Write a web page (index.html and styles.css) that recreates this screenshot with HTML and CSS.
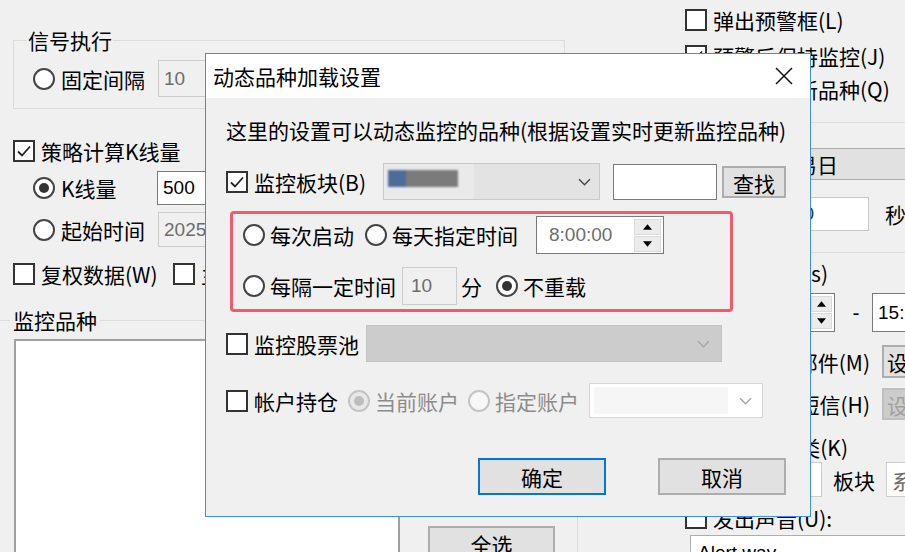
FILE: index.html
```html
<!DOCTYPE html>
<html lang="zh-CN">
<head>
    <meta charset="UTF-8">
    <title>动态品种加载设置</title>
    <link rel="stylesheet" href="styles.css">
</head>
<body>
    <div class="app">
        <!-- main window, left part -->
        <div class="left-col">
            <fieldset class="group group-signal">
                <legend>信号执行</legend>
                <div class="row row-fixed">
                    <span class="radio"></span><span class="lbl w97">固定间隔</span>
                    <span class="edit edit-off w120">10</span>
                </div>
            </fieldset>

            <div class="row row-kcheck">
                <span class="check on"><svg viewBox="0 0 18 18"><path d="M3 9.5l4 4 8-9"/></svg></span>
                <span class="lbl">策略计算K线量</span>
            </div>
            <div class="row row-kbars indent">
                <span class="radio on"></span><span class="lbl w96">K线量</span>
                <span class="edit w120">500</span>
            </div>
            <div class="row row-start indent">
                <span class="radio"></span><span class="lbl w97">起始时间</span>
                <span class="edit edit-off w120">2025-01-01</span>
            </div>
            <div class="row row-adj">
                <span class="check"></span><span class="lbl w132">复权数据(W)</span>
                <span class="check"></span><span class="lbl">主图叠加</span>
            </div>

            <fieldset class="group group-list">
                <legend>监控品种</legend>
                <div class="list-wrap">
                    <div class="listbox"></div>
                    <div class="list-side"><button class="btn btn-all">全选</button></div>
                </div>
            </fieldset>
        </div>

        <!-- main window, right part -->
        <div class="right-col">
            <div class="rrow r1"><span class="check"></span><span class="lbl">弹出预警框(L)</span></div>
            <div class="rrow r2">
                <span class="check on"><svg viewBox="0 0 18 18"><path d="M3 9.5l4 4 8-9"/></svg></span>
                <span class="lbl">预警后保持监控(J)</span>
            </div>
            <div class="rrow r3"><span class="check"></span><span class="lbl">自动添加新品种(Q)</span></div>

            <div class="rgroup rgroup-time">
                <div class="day-bar">只在交易日</div>
                <div class="row row-interval">
                    <span class="edit edit-sec">60</span><span class="lbl sec">秒</span>
                </div>
            </div>

            <div class="rgroup rgroup-alert">
                <div class="row r-range"><span class="lbl rlabel w138">监控时段(s)</span></div>
                <div class="row r-spin">
                    <span class="edit spin-edit">
                        <span>09:30:00</span>
                        <span class="spin-btns">
                            <span class="spin-btn"><svg viewBox="0 0 8 5"><path d="M0 5L4 0 8 5z"/></svg></span>
                            <span class="spin-btn"><svg viewBox="0 0 8 5"><path d="M0 0L4 5 8 0z"/></svg></span>
                        </span>
                    </span>
                    <span class="dash">-</span>
                    <span class="edit time-edit">15:00:00</span>
                </div>
                <div class="row r-mail"><span class="lbl rlabel w180">发送邮件(M)</span><button class="btn btn-set">设置</button></div>
                <div class="row r-sms"><span class="lbl rlabel w180">发送短信(H)</span><button class="btn btn-set" disabled>设置</button></div>
                <div class="row r-cat"><span class="lbl rlabel w158">品种分类(K)</span></div>
                <div class="row r-board">
                    <span class="edit board-edit">1</span><span class="lbl board-lbl">板块</span>
                    <span class="edit board-combo">系统板块</span>
                </div>
            </div>

            <div class="rrow r-sound"><span class="check"></span><span class="lbl">发出声音(U):</span></div>
            <div class="sound-file"><span class="edit sound-edit">Alert.wav</span></div>
        </div>
    </div>

    <!-- modal dialog on top -->
    <div class="dialog">
        <div class="titlebar">
            <span class="title">动态品种加载设置</span>
            <svg class="close" viewBox="0 0 18 18"><path d="M1 1L17 17M17 1L1 17"/></svg>
        </div>
        <div class="dlg-body">
            <p class="desc">这里的设置可以动态监控的品种(根据设置实时更新监控品种)</p>

            <div class="drow row-board">
                <label class="chk-item w157">
                    <span class="check on"><svg viewBox="0 0 18 18"><path d="M3 9.5l4 4 8-9"/></svg></span>
                    <span class="lbl">监控板块(B)</span>
                </label>
                <div class="combo combo-board">
                    <span class="blur-box"><span class="blur"></span></span>
                    <svg class="chev" viewBox="0 0 12 7"><path d="M1 1l5 5 5-5"/></svg>
                </div>
                <span class="edit find-edit"></span>
                <button class="btn find-btn">查找</button>
            </div>

            <div class="reload-box">
                <div class="drow rl-row1">
                    <span class="radio"></span><span class="lbl">每次启动</span>
                    <span class="radio r-gap"></span><span class="lbl">每天指定时间</span>
                    <span class="edit day-spin">
                        <span class="spin-text">8:00:00</span>
                        <span class="spin-btns">
                            <span class="spin-btn"><svg viewBox="0 0 8 5"><path d="M0 5L4 0 8 5z"/></svg></span>
                            <span class="spin-btn"><svg viewBox="0 0 8 5"><path d="M0 0L4 5 8 0z"/></svg></span>
                        </span>
                    </span>
                </div>
                <div class="drow rl-row2">
                    <span class="radio"></span><span class="lbl">每隔一定时间</span>
                    <span class="edit edit-off min-edit">10</span>
                    <span class="lbl min-lbl">分</span>
                    <span class="radio on r-gap2"></span><span class="lbl">不重载</span>
                </div>
            </div>

            <div class="drow row-pool">
                <label class="chk-item w140">
                    <span class="check"></span><span class="lbl">监控股票池</span>
                </label>
                <div class="combo combo-pool">
                    <svg class="chev" viewBox="0 0 12 7"><path d="M1 1l5 5 5-5"/></svg>
                </div>
            </div>

            <div class="drow row-acct">
                <span class="check"></span><span class="lbl">帐户持仓</span>
                <span class="radio off on acct-r1"></span><span class="lbl dim">当前账户</span>
                <span class="radio off acct-r2"></span><span class="lbl dim">指定账户</span>
                <div class="combo combo-acct">
                    <span class="acct-inner"></span>
                    <svg class="chev" viewBox="0 0 12 7"><path d="M1 1l5 5 5-5"/></svg>
                </div>
            </div>

            <div class="drow row-btns">
                <button class="btn btn-ok">确定</button>
                <button class="btn btn-cancel">取消</button>
            </div>
        </div>
    </div>
</body>
</html>
```

FILE: styles.css
```css
* {
    box-sizing: border-box;
}
body {
    margin: 0;
    width: 905px;
    height: 552px;
    overflow: hidden;
    position: relative;
    background-color: #f0f0f0;
    font-family: "Noto Sans CJK SC", "Noto Sans", sans-serif;
    font-size: 21px;
    color: #000;
}
.app {
    display: flex;
    height: 552px;
    overflow: hidden;
}
.row, .rrow, .drow {
    display: flex;
    align-items: center;
}
.lbl {
    white-space: nowrap;
    line-height: 28px;
    flex: none;
}
.dim {
    color: #8c8c8c;
}

/* check boxes and radios */
.check {
    width: 22px;
    height: 22px;
    border: 2px solid #333;
    background-color: #fff;
    flex: none;
    display: flex;
}
.check svg {
    width: 18px;
    height: 18px;
}
.check path {
    fill: none;
    stroke: #222;
    stroke-width: 1.8;
}
.check + .lbl {
    margin-left: 6px;
}
.radio {
    width: 22px;
    height: 22px;
    border: 2px solid #444;
    border-radius: 50%;
    background-color: #fff;
    flex: none;
    display: flex;
    align-items: center;
    justify-content: center;
}
.radio.on::after {
    content: "";
    width: 10px;
    height: 10px;
    border-radius: 50%;
    background-color: #333;
}
.radio + .lbl {
    margin-left: 6px;
}
.radio.off {
    border-color: #c4c4c4;
    background-color: #f7f7f7;
}
.radio.off.on {
    background-color: #e8e8e8;
}
.radio.off.on::after {
    background-color: #bdbdbd;
}

/* edits, buttons, combos */
.edit {
    display: flex;
    align-items: center;
    height: 100%;
    flex: none;
    padding-left: 5px;
    background-color: #fff;
    border: 1px solid #7a7a7a;
    font-family: "Liberation Sans", sans-serif;
    font-size: 19px;
    white-space: nowrap;
    overflow: hidden;
}
.edit-off {
    background-color: #f0f0f0;
    border-color: #cccccc;
    color: #6d6d6d;
}
.btn {
    font-family: inherit;
    font-size: 21px;
    background-color: #e1e1e1;
    border: 2px solid #adadad;
    padding: 0;
    color: #000;
    flex: none;
}
.btn:disabled {
    background-color: #cccccc;
    border-color: #bfbfbf;
    color: #a0a0a0;
}
.combo {
    display: flex;
    align-items: center;
    height: 100%;
    flex: none;
    position: relative;
}
.chev {
    width: 13px;
    height: 8px;
    margin-left: auto;
}
.chev path {
    fill: none;
    stroke: #444;
    stroke-width: 1.3;
}
.spin-btns {
    margin-left: auto;
    display: flex;
    flex-direction: column;
    gap: 1px;
    padding: 2px;
}
.spin-btn {
    width: 27px;
    height: 16px;
    background-color: #ececec;
    border: 1px solid #dadada;
    display: flex;
    align-items: center;
    justify-content: center;
}
.spin-btn svg {
    width: 9px;
    height: 6px;
}

/* left column of the main window */
.left-col {
    width: 577px;
    flex: none;
    padding: 26px 0 0 13px;
}
.group {
    margin: 0;
    border: 1px solid #dcdcdc;
    min-width: 0;
}
.group legend {
    line-height: 28px;
    padding: 0 1px;
}
.group-signal {
    width: 552px;
    padding: 0 0 11px 19px;
}
.group-signal legend {
    margin-left: -6px;
}
.row-fixed {
    margin-top: 6px;
    height: 37px;
}
.w96 { width: 96px; }
.w97 { width: 97px; }
.w120 { width: 120px; }
.w132 { width: 132px; }
.w138 { width: 138px; }
.w140 { width: 140px; }
.w157 { width: 157px; }
.w158 { width: 158px; }
.w180 { width: 180px; }
.indent {
    padding-left: 20px;
}
.row-kcheck {
    margin-top: 28px;
    height: 28px;
}
.row-kbars {
    margin-top: 6px;
    height: 34px;
}
.row-start {
    margin-top: 7px;
    height: 35px;
}
.row-adj {
    margin-top: 13px;
    height: 28px;
}
.group-list {
    margin: 18px 0 0 -13px;
    width: 578px;
    height: 300px;
    border-left: none;
    padding: 0 0 0 14px;
}
.group-list legend {
    margin-left: -4px;
    padding: 0 3px;
}
.list-wrap {
    display: flex;
    margin-top: 5px;
}
.listbox {
    width: 386px;
    height: 260px;
    background-color: #fff;
    border: 2px solid #a0a0a0;
    border-bottom: none;
}
.btn-all {
    margin: 187px 0 0 28px;
    width: 127px;
    height: 36px;
}

/* right column of the main window */
.right-col {
    width: 260px;
    flex: none;
    margin-left: 95px;
    padding-top: 6px;
}
.rrow {
    height: 28px;
    padding-left: 13px;
}
.r2 { margin-top: 8px; }
.r3 { margin-top: 5px; }
.rgroup {
    margin-left: 8px;
    border-top: 1px solid #dcdcdc;
    border-left: 1px solid #dcdcdc;
    padding-left: 9px;
}
.rgroup-time {
    margin-top: 19px;
    height: 130px;
}
.day-bar {
    margin-top: 25px;
    width: 300px;
    height: 32px;
    line-height: 30px;
    padding-left: 42px;
    background-color: #e1e1e1;
    border: 1px solid #adadad;
    white-space: nowrap;
}
.row-interval {
    margin-top: 17px;
    height: 34px;
}
.edit-sec {
    margin-left: 95px;
    width: 84px;
    padding-left: 7px;
    border-color: #c8c8c8;
    color: #333;
}
.sec {
    margin-left: 16px;
}
.rgroup-alert {
    height: 246px;
}
.rlabel {
    text-align: right;
}
.r-range {
    margin-top: 6px;
    height: 28px;
}
.r-spin {
    margin-top: 6px;
    height: 39px;
}
.spin-edit {
    margin-left: 10px;
    width: 135px;
}
.spin-edit .spin-btn {
    width: 21px;
}
.dash {
    flex: none;
    font-family: "Liberation Sans", sans-serif;
    width: 22px;
    margin-left: 10px;
    text-align: center;
}
.time-edit {
    margin-left: 5px;
    width: 110px;
}
.r-mail {
    margin-top: 13px;
    height: 33px;
}
.r-sms {
    margin-top: 10px;
    height: 32px;
}
.btn-set {
    margin-left: 12px;
    width: 80px;
    height: 100%;
    text-align: left;
    padding-left: 3px;
}
.r-cat {
    margin-top: 14px;
    height: 26px;
}
.r-board {
    margin-top: 2px;
    height: 35px;
}
.board-edit {
    margin-left: 70px;
    width: 62px;
    border-color: #cccccc;
}
.board-lbl {
    margin-left: 11px;
}
.board-combo {
    margin-left: 11px;
    width: 100px;
    border-color: #cccccc;
    color: #6d6d6d;
    font-family: inherit;
    font-size: 21px;
}
.r-sound {
    margin-top: 6px;
    height: 28px;
}
.sound-file {
    margin-top: 3px;
    padding-left: 18px;
    height: 36px;
}
.sound-edit {
    width: 260px;
    padding-left: 7px;
    border-color: #adadad;
}

/* dialog */
.dialog {
    position: absolute;
    left: 205px;
    top: 53px;
    width: 606px;
    height: 464px;
    background-color: #f0f0f0;
    border: 1px solid #3b8ee2;
}
.titlebar {
    height: 44px;
    background-color: #fff;
    display: flex;
    align-items: center;
    padding-left: 7px;
}
.title {
    white-space: nowrap;
}
.close {
    margin-left: auto;
    margin-right: 17px;
    width: 18px;
    height: 18px;
}
.close path {
    stroke: #111;
    stroke-width: 1.5;
}
.dlg-body {
    padding: 18px 0 0 20px;
}
.desc {
    margin: 0;
    line-height: 28px;
    white-space: nowrap;
}
.chk-item {
    display: flex;
    align-items: center;
    flex: none;
}
.row-board {
    margin-top: 19px;
    height: 37px;
}
.combo-board {
    width: 217px;
    background-color: #e3e3e3;
    border: 1px solid #c9c9c9;
    padding: 0 8px 0 0;
}
.blur-box {
    width: 90px;
    height: 100%;
    display: flex;
    align-items: center;
    padding-left: 4px;
    background-color: #eaeaea;
}
.blur {
    display: block;
    width: 70px;
    height: 17px;
    margin-top: -6px;
    background: linear-gradient(to right, #4d6c97 0, #4d6c97 18px, #7b7b7b 18px, #7b7b7b 100%);
    filter: blur(1px);
}
.find-edit {
    margin-left: 13px;
    width: 104px;
    height: 36px;
}
.find-btn {
    margin-left: 5px;
    width: 64px;
    height: 32px;
}
.reload-box {
    margin: 11px 0 0 4px;
    width: 503px;
    height: 101px;
    border: 3px solid #f15b6c;
    border-radius: 4px;
    padding: 2px 0 0 10px;
}
.reload-box .radio + .lbl {
    margin-left: 5px;
}
.rl-row1 {
    height: 38px;
}
.r-gap {
    margin-left: 11px;
}
.day-spin {
    margin-left: 18px;
    width: 128px;
    padding-left: 12px;
    color: #6d6d6d;
}
.rl-row2 {
    margin-top: 13px;
    height: 38px;
}
.min-edit {
    margin-left: 6px;
    width: 55px;
    padding-left: 8px;
}
.min-lbl {
    margin-left: 4px;
}
.r-gap2 {
    margin-left: 14px;
}
.row-pool {
    margin-top: 13px;
    height: 37px;
}
.combo-pool {
    width: 356px;
    background-color: #cccccc;
    border: 1px solid #c2c2c2;
    padding-right: 11px;
}
.combo-pool .chev path,
.combo-acct .chev path {
    stroke: #a6a6a6;
}
.row-acct {
    margin-top: 21px;
    height: 35px;
}
.acct-r1 {
    margin-left: 10px;
}
.radio.off + .lbl {
    margin-left: 5px;
}
.acct-r2 {
    margin-left: 9px;
}
.combo-acct {
    margin-left: 10px;
    width: 174px;
    background-color: #fff;
    border: 1px solid #d6d6d6;
    padding: 3px 10px 3px 4px;
}
.acct-inner {
    width: 134px;
    height: 100%;
    background-color: #f6f6f6;
}
.row-btns {
    margin-top: 40px;
    height: 37px;
}
.btn-ok {
    margin-left: 252px;
    width: 128px;
    height: 100%;
    border-color: #0078d7;
}
.btn-cancel {
    margin-left: 52px;
    width: 128px;
    height: 100%;
}
```
